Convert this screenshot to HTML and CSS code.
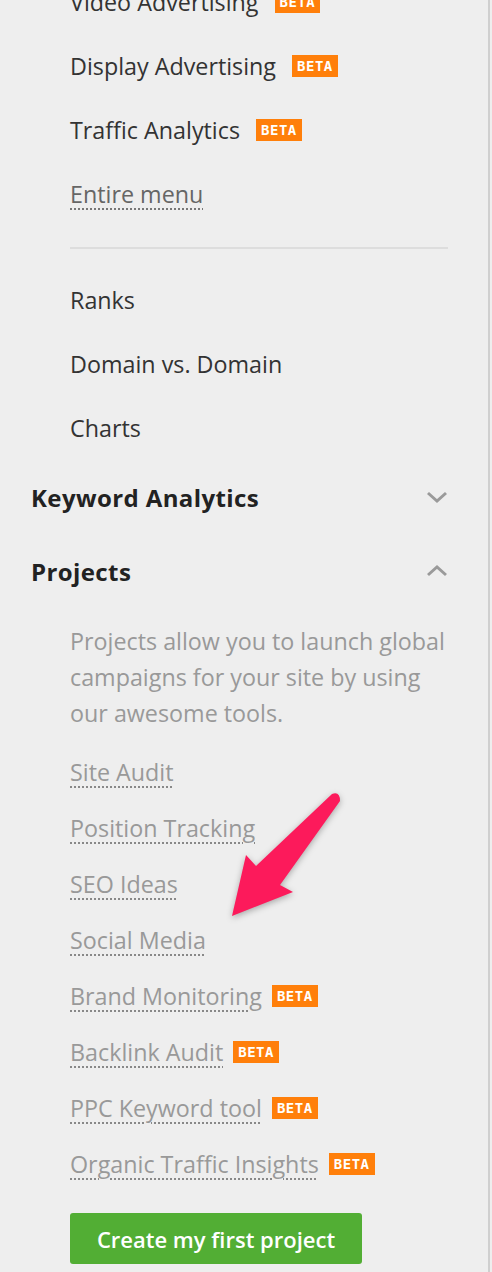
FILE: index.html
```html
<!DOCTYPE html>
<html lang="en">
<head>
    <meta charset="UTF-8">
    <meta name="viewport" content="width=device-width, initial-scale=1.0">
    <title>Menu</title>
    <link rel="stylesheet" href="styles.css">
</head>
<body>
    <div class="panel">
        <ul class="submenu">
            <li class="item">Video Advertising <span class="beta">BETA</span></li>
            <li class="item">Display Advertising <span class="beta">BETA</span></li>
            <li class="item">Traffic Analytics <span class="beta">BETA</span></li>
            <li class="item"><a class="more" href="#">Entire menu</a></li>
        </ul>
        <hr class="divider">
        <ul class="submenu">
            <li class="item">Ranks</li>
            <li class="item">Domain vs. Domain</li>
            <li class="item">Charts</li>
        </ul>

        <div class="section">
            <h3>Keyword Analytics</h3>
            <svg class="chevron" width="22" height="14" viewBox="0 0 22 14"><path d="M2 3 L11 11 L20 3" /></svg>
        </div>
        <div class="section">
            <h3>Projects</h3>
            <svg class="chevron" width="22" height="14" viewBox="0 0 22 14"><path d="M2 11 L11 3 L20 11" /></svg>
        </div>

        <p class="desc">Projects allow you to launch global campaigns for your site by using our awesome tools.</p>

        <ul class="links">
            <li><a href="#">Site Audit</a></li>
            <li><a href="#">Position Tracking</a></li>
            <li><a href="#">SEO Ideas</a></li>
            <li><a href="#">Social Media</a></li>
            <li><a href="#">Brand Monitoring</a> <span class="beta">BETA</span></li>
            <li><a href="#">Backlink Audit</a> <span class="beta">BETA</span></li>
            <li><a href="#">PPC Keyword tool</a> <span class="beta">BETA</span></li>
            <li><a href="#">Organic Traffic Insights</a> <span class="beta">BETA</span></li>
        </ul>

        <button class="create">Create my first project</button>
    </div>

    <!-- annotation arrow drawn over the screenshot -->
    <svg class="arrow" width="492" height="1272" viewBox="0 0 492 1272">
        <path d="M332 794 L256 866 L246 855 L232 916 L293 892 L280 885 L340 801 Q340 791 332 794 Z" />
    </svg>
</body>
</html>
```

FILE: styles.css
```css
body {
    margin: 0;
    background-color: #eeeeee;
    font-family: "Open Sans", "Noto Sans", sans-serif;
    color: #333;
}

.panel {
    width: 490px;
    min-height: 1272px;
    border-right: 2px solid #cfcfcf;
    box-sizing: border-box;
    overflow: hidden;
}

.submenu {
    list-style: none;
    margin: 0;
    padding: 0 40px 0 70px;
}
.submenu:first-child {
    margin-top: -30px;
}

.item {
    height: 64px;
    display: flex;
    align-items: center;
    font-size: 23.3px;
    color: #333;
    white-space: pre;
}

.beta {
    display: inline-block;
    margin-left: 10px;
    padding: 0 5px;
    height: 22px;
    line-height: 22px;
    background-color: #ff7f0a;
    color: #fff;
    font-family: "DejaVu Sans Mono", monospace;
    font-weight: bold;
    font-size: 14px;
    letter-spacing: 0.5px;
}

.more {
    color: #666;
    text-decoration: underline dotted #777;
    text-underline-offset: 5px;
    text-decoration-thickness: 2px;
}

.divider {
    margin: 21px 40px 19px 70px;
    border: none;
    height: 2px;
    background-color: #dddddd;
}

.section {
    height: 74px;
    display: flex;
    align-items: center;
    justify-content: space-between;
    padding: 0 40px 0 31px;
}
.section h3 {
    margin: 0;
    font-size: 24px;
    font-weight: 700;
    letter-spacing: 0.4px;
    color: #222;
}
.chevron path {
    fill: none;
    stroke: #9a9a9a;
    stroke-width: 3;
}

.desc {
    margin: 15px 40px 13px 70px;
    font-size: 23.3px;
    line-height: 36px;
    color: #999;
}

.links {
    list-style: none;
    margin: 0;
    padding: 0 40px 0 70px;
}
.links li {
    height: 56px;
    display: flex;
    align-items: center;
    font-size: 23.3px;
    white-space: pre;
}
.links a {
    color: #999;
    text-decoration: underline dotted #888;
    text-underline-offset: 5px;
    text-decoration-thickness: 2px;
}

.create {
    margin: 21px 0 0 70px;
    width: 292px;
    height: 51px;
    border: none;
    border-radius: 3px;
    background-color: #52ae34;
    color: #fff;
    font-family: "Open Sans", sans-serif;
    font-size: 22px;
    font-weight: 600;
}

.arrow {
    position: absolute;
    top: 0;
    left: 0;
    pointer-events: none;
}
.arrow path {
    fill: #fc1a5b;
    filter: drop-shadow(0 2px 3px rgba(0, 0, 0, 0.3));
}
```
